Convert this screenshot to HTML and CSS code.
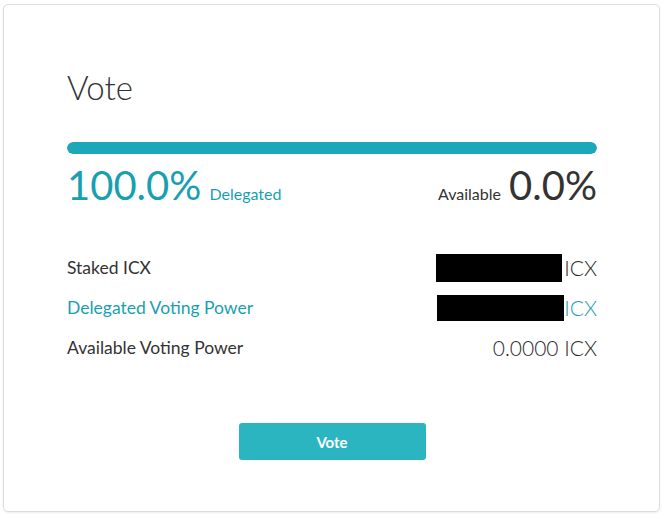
FILE: index.html
```html
<!DOCTYPE html>
<html lang="en">
<head>
    <meta charset="UTF-8">
    <meta name="viewport" content="width=device-width, initial-scale=1.0">
    <title>Vote</title>
    <link rel="stylesheet" href="styles.css">
</head>
<body>
    <div class="vote-card">
        <h1 class="vote-title">Vote</h1>

        <div class="progress-bar">
            <div class="progress-fill" style="width: 100%"></div>
        </div>

        <div class="summary">
            <div class="summary-left">
                <span class="big-value delegated">100.0%</span>
                <span class="small-label delegated">Delegated</span>
            </div>
            <div class="summary-right">
                <span class="small-label">Available</span>
                <span class="big-value">0.0%</span>
            </div>
        </div>

        <div class="rows">
            <div class="row">
                <div class="row-label">Staked ICX</div>
                <div class="row-value"><span class="redacted r1"></span>ICX</div>
            </div>
            <div class="row highlight">
                <div class="row-label">Delegated Voting Power</div>
                <div class="row-value"><span class="redacted r2"></span>ICX</div>
            </div>
            <div class="row">
                <div class="row-label">Available Voting Power</div>
                <div class="row-value">0.0000 ICX</div>
            </div>
        </div>

        <div class="actions">
            <button class="vote-button">Vote</button>
        </div>
    </div>
</body>
</html>
```

FILE: styles.css
```css
* {
    margin: 0;
    padding: 0;
    box-sizing: border-box;
}

body {
    font-family: Lato, 'Noto Sans', sans-serif;
    background: #ffffff;
    padding: 4px 4px 5px 3px;
}

.vote-card {
    width: 657px;
    height: 508px;
    border: 1px solid #dcdcdc;
    border-radius: 5px;
    box-shadow: 0 1px 2px rgba(0, 0, 0, 0.08);
    padding: 62px 62px 0 63px;
    color: #333333;
}

.vote-title {
    font-size: 33px;
    font-weight: 300;
    line-height: 40px;
    color: #333333;
    margin-bottom: 35px;
}

.progress-bar {
    height: 12px;
    border-radius: 6px;
    background: #e6e6e6;
    overflow: hidden;
}

.progress-fill {
    height: 100%;
    background: #1ba8b8;
    border-radius: 6px;
}

.summary {
    display: flex;
    justify-content: space-between;
    align-items: baseline;
    margin-top: 8px;
    height: 50px;
}

.big-value {
    font-size: 40px;
    font-weight: 400;
    line-height: 46px;
    color: #333333;
}

.small-label {
    font-size: 16px;
    color: #333333;
    margin: 0 4px 0 4px;
}

.summary-left .small-label {
    margin-left: 4px;
}

.delegated {
    color: #1a9fb1;
}

.rows {
    margin-top: 42px;
    display: flex;
    flex-direction: column;
    gap: 13px;
}

.row {
    display: flex;
    justify-content: space-between;
    align-items: center;
    height: 27px;
    font-size: 17.5px;
    color: #333333;
}

.row.highlight {
    color: #1a9fb1;
}

.row-value {
    display: flex;
    align-items: center;
    font-size: 21px;
    font-weight: 300;
    color: #2a2a2a;
}

.row.highlight .row-value {
    color: #1a9fb1;
}

.redacted {
    display: inline-block;
    background: #000000;
}

.r1 {
    width: 126px;
    height: 28px;
    margin-right: 2px;
}

.r2 {
    width: 127px;
    height: 26px;
}

.actions {
    display: flex;
    justify-content: center;
    margin-top: 62px;
}

.vote-button {
    width: 187px;
    height: 37px;
    border: none;
    border-radius: 3px;
    background: #2bb5c1;
    color: #ffffff;
    font-family: inherit;
    font-size: 15px;
    font-weight: 700;
}
```
